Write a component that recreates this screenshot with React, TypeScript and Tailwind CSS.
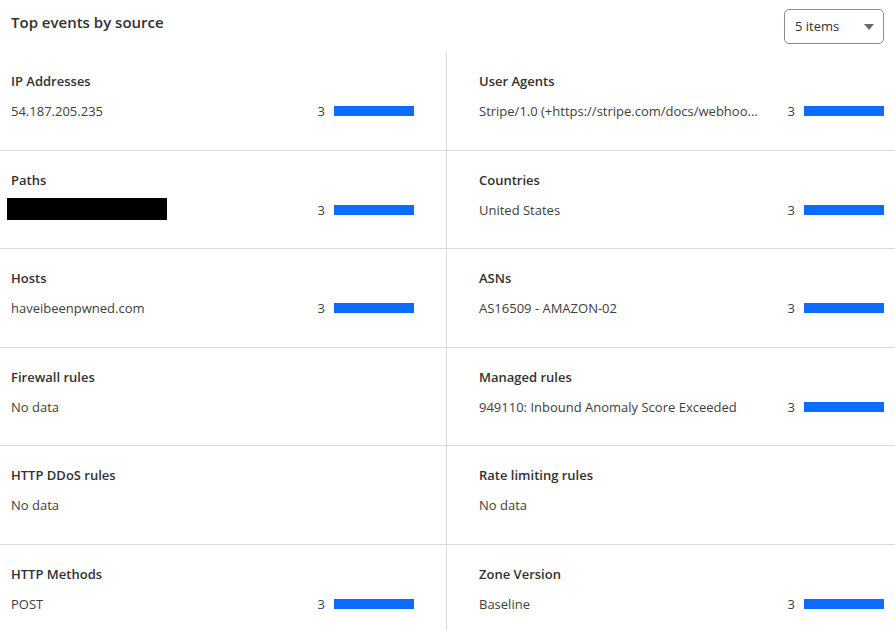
type Cell = { title: string; value?: string; count?: number; redacted?: boolean };

const data: [Cell, Cell][] = [
  [
    { title: 'IP Addresses', value: '54.187.205.235', count: 3 },
    { title: 'User Agents', value: 'Stripe/1.0 (+https://stripe.com/docs/webhoo...', count: 3 },
  ],
  [
    { title: 'Paths', redacted: true, count: 3 },
    { title: 'Countries', value: 'United States', count: 3 },
  ],
  [
    { title: 'Hosts', value: 'haveibeenpwned.com', count: 3 },
    { title: 'ASNs', value: 'AS16509 - AMAZON-02', count: 3 },
  ],
  [
    { title: 'Firewall rules' },
    { title: 'Managed rules', value: '949110: Inbound Anomaly Score Exceeded', count: 3 },
  ],
  [{ title: 'HTTP DDoS rules' }, { title: 'Rate limiting rules' }],
  [
    { title: 'HTTP Methods', value: 'POST', count: 3 },
    { title: 'Zone Version', value: 'Baseline', count: 3 },
  ],
];

function SourceCell({ cell, side }: { cell: Cell; side: 'left' | 'right' }) {
  const hasData = cell.count !== undefined;
  return (
    <div className={`relative pt-[20px] ${side === 'left' ? 'pl-[11px] pr-[32px]' : 'pl-[32px] pr-[11px]'}`}>
      <div className="text-[13px] leading-[18px] font-semibold text-[#313131]">{cell.title}</div>
      <div className="mt-[12px] flex items-center h-[18px] text-[13px] leading-[18px] text-[#404040]">
        {cell.redacted ? (
          <div className="flex-1" />
        ) : (
          <span className="flex-1 min-w-0 whitespace-nowrap">{hasData ? cell.value : 'No data'}</span>
        )}
        {hasData && (
          <>
            <span className="ml-[22px]">{cell.count}</span>
            <span className="ml-[9px] w-[80px] h-[10px] bg-[#0b6cff] shrink-0" />
          </>
        )}
      </div>
      {/* redacted value */}
      {cell.redacted && <div className="absolute left-[7px] top-[47px] w-[160px] h-[22px] bg-black" />}
    </div>
  );
}

export default function App() {
  return (
    <div
      className="w-[895px] h-[630px] bg-white overflow-hidden"
      style={{ fontFamily: '"Open Sans", "Noto Sans", sans-serif' }}
    >
      {/* Header */}
      <div className="h-[52px] flex items-start justify-between px-[11px]">
        <h2 className="mt-[12px] text-[15px] leading-[20px] font-semibold text-[#313131]">
          Top events by source
        </h2>
        <button className="mt-[9px] w-[100px] h-[35px] border border-[#8c8c8c] rounded-[5px] flex items-center justify-between pl-[10px] pr-[9px] text-[13px] text-[#313131]">
          <span>5 items</span>
          <svg width="10" height="6" viewBox="0 0 10 6">
            <path d="M0 0h10L5 6z" fill="#6b6b6b" />
          </svg>
        </button>
      </div>

      {/* Grid */}
      <div className="grid grid-cols-[447px_448px]">
        {data.map(([l, r], i) => {
          const rowBorder = i < data.length - 1 ? 'border-b border-b-[#d9d9d9]' : '';
          return (
            <div key={i} className="contents">
              <div className={`h-[98.5px] border-r border-r-[#d9d9d9] ${rowBorder}`}>
                <SourceCell cell={l} side="left" />
              </div>
              <div className={`h-[98.5px] ${rowBorder}`}>
                <SourceCell cell={r} side="right" />
              </div>
            </div>
          );
        })}
      </div>
    </div>
  );
}
